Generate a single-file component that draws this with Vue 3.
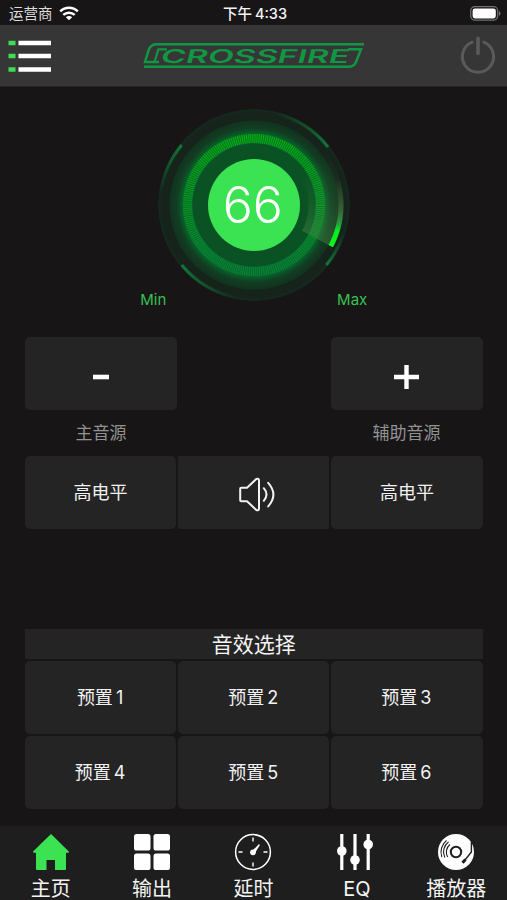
<script setup>
import { ref } from 'vue'

const volume = ref(66)
const presets = [1, 2, 3, 4, 5, 6]
const tabs = [
  { id: 'home', label: '主页' },
  { id: 'output', label: '输出' },
  { id: 'delay', label: '延时' },
  { id: 'eq', label: 'EQ' },
  { id: 'player', label: '播放器' },
]
</script>

<template>
  <div class="screen">
    <div class="status">
      <div class="carrier">
        <span>运营商</span>
        <svg width="20" height="15" viewBox="0 0 20 15" fill="none" stroke="#fff" stroke-width="2.5">
          <path d="M1.2 5.3C6.2.6 13.8.6 18.8 5.3" />
          <path d="M4.3 8.9C7.6 5.9 12.4 5.9 15.7 8.9" />
          <path d="M10 14.2 6.8 11.2C8.6 9.6 11.4 9.6 13.2 11.2Z" fill="#fff" stroke="none" />
        </svg>
      </div>
      <div class="time">下午 4:33</div>
      <svg class="battery" width="31" height="15" viewBox="0 0 31 15">
        <rect x=".7" y=".7" width="27" height="13.4" rx="4" fill="none" stroke="#727272" stroke-width="1.2" />
        <rect x="2.6" y="2.4" width="23.2" height="10" rx="2.4" fill="#fff" />
        <path d="M29 5v4.8c2-.9 2-3.9 0-4.8Z" fill="#727272" />
      </svg>
    </div>

    <header class="bar">
      <svg class="menu" width="43" height="32" viewBox="0 0 43 32">
        <path d="M.5 3h7M.5 16h7M.5 29.5h7" stroke="#3fdc58" stroke-width="4.4" />
        <path d="M10.5 3H43M10.5 16H43M10.5 29.5H43" stroke="#fff" stroke-width="4.4" />
      </svg>
      <svg class="logo" width="222" height="27" viewBox="0 0 222 27">
        <g fill="none" stroke="#109743" stroke-width="2.5">
          <path d="M221 2.2H14Q8 2.2 6 7L2 20H16" />
          <path d="M11.5 20 15.4 7.4H24" stroke-width="2.2" />
          <path d="M1 24.7H206Q211 24.7 213 20L218 7.2H205" />
        </g>
        <text x="17" y="20.6" textLength="188" lengthAdjust="spacingAndGlyphs" transform="translate(5 0) skewX(-14)">CROSSFIRE</text>
      </svg>
      <svg class="power" width="36" height="39" viewBox="0 0 36 39" fill="none" stroke="#5a5a5a" stroke-linecap="round">
        <path d="M12.2 6.2A15.6 15.6 0 1 0 23.8 6.2" stroke-width="3" />
        <path d="M18 2.4V17.5" stroke-width="3.6" />
      </svg>
    </header>

    <main>
      <section class="dial-area">
        <div class="dial">
          <svg class="rings" width="192" height="192" viewBox="-96 -96 192 192">
            <defs>
              <linearGradient id="ticks" x1="0" y1="-71" x2="0" y2="71" gradientUnits="userSpaceOnUse">
                <stop offset="0" stop-color="#04b50a" />
                <stop offset=".35" stop-color="#08a01a" />
                <stop offset="1" stop-color="#078139" />
              </linearGradient>
              <linearGradient id="arcA" x1="20" y1="-90" x2="74" y2="-58" gradientUnits="userSpaceOnUse">
                <stop offset="0" stop-color="#0e6c34" stop-opacity="0" /><stop offset="1" stop-color="#0f7839" />
              </linearGradient>
              <linearGradient id="arcB" x1="-93" y1="-12" x2="-72" y2="-60" gradientUnits="userSpaceOnUse">
                <stop offset="0" stop-color="#0e6c34" stop-opacity="0" /><stop offset="1" stop-color="#0f7839" />
              </linearGradient>
              <linearGradient id="arcC" x1="-15" y1="92" x2="-72" y2="60" gradientUnits="userSpaceOnUse">
                <stop offset="0" stop-color="#0e6c34" stop-opacity="0" /><stop offset="1" stop-color="#0f7839" />
              </linearGradient>
              <linearGradient id="arcD" x1="90" y1="28" x2="72" y2="60" gradientUnits="userSpaceOnUse">
                <stop offset="0" stop-color="#0e6c34" stop-opacity="0" /><stop offset="1" stop-color="#0f7839" />
              </linearGradient>
            </defs>
            <circle r="66.5" fill="none" stroke="url(#ticks)" stroke-width="9" stroke-opacity=".2" />
            <circle r="66.5" fill="none" stroke="url(#ticks)" stroke-width="9" stroke-dasharray="1 1.089" />
            <g fill="none" stroke-width="3">
              <path d="M20 -91.8A94 94 0 0 1 74 -58" stroke="url(#arcA)" />
              <path d="M-93.2 -12A94 94 0 0 1 -72.3 -60" stroke="url(#arcB)" />
              <path d="M-15 92.8A94 94 0 0 1 -72.3 60" stroke="url(#arcC)" />
              <path d="M89.7 28A94 94 0 0 1 72.3 60" stroke="url(#arcD)" />
            </g>
          </svg>
          <div class="sweep"></div>
          <div class="pointer"></div>
          <div class="value">{{ volume }}</div>
        </div>
        <div class="limits"><span>Min</span><span>Max</span></div>
      </section>

      <section class="volume">
        <button aria-label="-">
          <svg width="16" height="26" viewBox="0 0 16 26"><path d="M0 13h16" stroke="#fff" stroke-width="4.6" /></svg>
        </button>
        <button aria-label="+">
          <svg width="26" height="26" viewBox="0 0 26 26"><path d="M0 13h25M12.5 1v24" stroke="#fff" stroke-width="4.4" /></svg>
        </button>
      </section>
      <div class="captions"><span>主音源</span><span>辅助音源</span></div>

      <section class="row sources">
        <button>高电平</button>
        <button class="mute" aria-label="mute">
          <svg width="38" height="36" viewBox="0 0 38 36" fill="none" stroke="#f2f2f2" stroke-width="2" stroke-linecap="round" stroke-linejoin="round">
            <path d="M1.2 11.8Q1.2 10.8 2.2 10.8H8L17.3 2Q20 1 20 3.4V31.6Q20 34 17.3 33L8 24.2H2.2Q1.2 24.2 1.2 23.2Z" />
            <path d="M24.8 11.2Q30.2 17.5 24.8 23.8M29.2 5.8Q39.6 17.5 29.2 29.4" />
          </svg>
        </button>
        <button>高电平</button>
      </section>

      <h2>音效选择</h2>
      <section class="row presets">
        <button v-for="n in presets" :key="n">预置 {{ n }}</button>
      </section>
    </main>

    <nav>
      <a v-for="tab in tabs" :key="tab.id" :class="tab.id">
        <svg v-if="tab.id === 'home'" width="38" height="38" viewBox="0 0 38 38">
          <path d="M19 1 1 18.6Q.8 19.8 2.5 19.8H4V36Q4 37 5 37H14.5V27H23V37H33Q34 37 34 36V19.8H36.2Q37.5 19.8 36.8 18.4Z" fill="#3be352" />
        </svg>
        <svg v-else-if="tab.id === 'output'" width="38" height="38" viewBox="0 0 38 38" fill="#fff">
          <rect x="1" y="1" width="16.5" height="16.5" rx="2.6" />
          <rect x="20.5" y="1" width="16.5" height="16.5" rx="2.6" />
          <rect x="1" y="20.5" width="16.5" height="16.5" rx="2.6" />
          <rect x="20.5" y="20.5" width="16.5" height="16.5" rx="2.6" />
        </svg>
        <svg v-else-if="tab.id === 'delay'" width="38" height="38" viewBox="0 0 38 38" fill="none" stroke="#fff">
          <circle cx="19" cy="19" r="17.4" stroke-width="1.5" />
          <path d="M19 4.5v4M19 29.5v4M4.5 19h4M29.5 19h4" stroke-width="1.4" />
          <path d="M17.2 19 24.8 11.2Q26 11 25.6 12.4L20.4 21Z" fill="#fff" stroke="none" />
          <circle cx="19" cy="19.3" r="2.9" fill="#fff" stroke="none" />
        </svg>
        <svg v-else-if="tab.id === 'eq'" width="38" height="38" viewBox="0 0 38 38" fill="#fff">
          <path d="M5.8 1v36M19 1v36M32.2 1v36" stroke="#fff" stroke-width="3.2" />
          <circle cx="5.8" cy="18" r="4.8" /><circle cx="19" cy="27" r="4.8" /><circle cx="32.2" cy="11.5" r="4.8" />
        </svg>
        <svg v-else width="38" height="38" viewBox="0 0 38 38">
          <circle cx="19" cy="19" r="18" fill="#fff" />
          <g fill="none" stroke="#1e1e1e">
            <circle cx="19" cy="19" r="5.2" stroke-width="2" />
            <path d="M10.7 24A9.6 9.6 0 0 1 13 11.5M7.8 24.5A12.4 12.4 0 0 1 11.5 9M4.8 24A15 15 0 0 1 9.5 7.5" stroke-width="1.1" />
            <path d="M34.4 9V19L26 29.5" stroke-width="1.4" />
            <path d="M28.5 26.5 25.5 29.8" stroke-width="3" />
          </g>
        </svg>
        <span>{{ tab.label }}</span>
      </a>
    </nav>
  </div>
</template>

<style>
body {
  margin: 0;
  background: #171516;
}
</style>

<style scoped>
.screen {
  width: 507px;
  height: 900px;
  display: flex;
  flex-direction: column;
  background: #171516;
  color: #f4f4f4;
  font-family: Inter, "Noto Sans CJK SC", sans-serif;
}
.status {
  height: 25px;
  flex: none;
  display: grid;
  grid-template-columns: 1fr auto 1fr;
  align-items: center;
  padding: 2px 6px 0 9px;
  box-sizing: border-box;
  font-size: 14.5px;
  line-height: 22px;
}
.carrier {
  display: flex;
  align-items: center;
  gap: 6px;
  color: #ddd;
}
.time {
  font-weight: 500;
  font-size: 14.5px;
  word-spacing: -1px;
}
.battery {
  justify-self: end;
}
.bar {
  height: 62px;
  flex: none;
  box-sizing: border-box;
  display: flex;
  align-items: center;
  justify-content: space-between;
  padding: 0 11px 0 8px;
  background: #363636;
  border-bottom: 1px solid #252525;
}
.logo {
  margin-right: 3px;
}
.logo text {
  font: 600 19px Inter, sans-serif;
  fill: #109743;
}
main {
  height: 739px;
  flex: none;
  box-sizing: border-box;
  padding: 22px 24.5px 0 25px;
}
.dial-area {
  height: 228px;
  display: flex;
  flex-direction: column;
  align-items: center;
}
.dial {
  position: relative;
  width: 192px;
  height: 192px;
  flex: none;
  border-radius: 50%;
  background: radial-gradient(circle closest-side,
    #0a5224 0 61px, #07642d 62px, #086429 71px, #0b5127 74px, #123e23 77px,
    #12331f 84px, #15241b 85px, #17231b 93px, #14291d 94px 95.5px, #171516 96px);
}
.rings, .sweep, .pointer {
  position: absolute;
  inset: 0;
}
.sweep, .pointer {
  border-radius: 50%;
}
.sweep {
  background: conic-gradient(rgba(75, 140, 70, 0) 50deg, rgba(75, 140, 70, .14) 85deg, rgba(75, 140, 70, .42) 118deg, transparent 118.4deg);
  mask: radial-gradient(circle closest-side, transparent 54px, #000 55px 89px, transparent 90px);
}
.pointer {
  background: conic-gradient(transparent 72deg, rgba(80, 140, 80, .5) 94deg, #299642 102deg, #08ed1c 107deg, #0df51e 118deg, transparent 118.4deg);
  mask: radial-gradient(circle closest-side, transparent 84px, #000 85px 89px, transparent 90px);
}
.value {
  position: absolute;
  inset: 50px;
  display: grid;
  place-items: center;
  border-radius: 50%;
  background: #3be352;
  color: #fff;
  font-size: 50px;
  font-weight: 350;
  line-height: 1;
  padding-right: 2px;
  box-sizing: border-box;
}
.limits {
  width: 227px;
  display: flex;
  justify-content: space-between;
  margin-top: -11px;
  color: #37c153;
  font-size: 15px;
  line-height: 20px;
}
button {
  display: flex;
  align-items: center;
  justify-content: center;
  height: 73px;
  padding: 0;
  border: 0;
  border-radius: 5px;
  background: #242424;
  color: #f2f2f2;
  font: 400 18px/26px Inter, "Noto Sans CJK SC", sans-serif;
}
.volume, .captions {
  display: flex;
  justify-content: space-between;
}
.volume button {
  width: 152px;
  padding-top: 7px;
}
.captions {
  height: 46px;
  box-sizing: border-box;
  padding-bottom: 4px;
  align-items: center;
  color: #929292;
  font-size: 17px;
}
.captions span {
  width: 152px;
  text-align: center;
}
.row {
  display: grid;
  grid-template-columns: repeat(3, 1fr);
  gap: 2px;
}
.presets button {
  padding-right: 1px;
  word-spacing: -2px;
}
.sources .mute {
  border-radius: 2px;
  padding: 4px 0 0 8px;
}
h2 {
  height: 30px;
  margin: 100px 0 2px;
  background: #242424;
  text-align: center;
  font-size: 21px;
  font-weight: 400;
  line-height: 32px;
}
nav {
  height: 74px;
  flex: none;
  display: grid;
  grid-template-columns: repeat(5, 1fr);
  background: #1e1e1e;
}
nav a {
  display: flex;
  flex-direction: column;
  align-items: center;
  padding-top: 7px;
}
nav span {
  margin-top: 8px;
  font-size: 20px;
  line-height: 21px;
  white-space: nowrap;
}
nav .eq span {
  padding-left: 4px;
}
</style>
